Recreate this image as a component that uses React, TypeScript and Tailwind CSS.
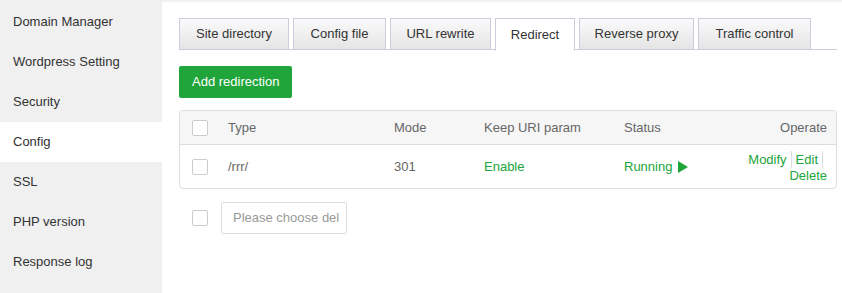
import React from 'react';

const menu = ['Domain Manager', 'Wordpress Setting', 'Security', 'Config', 'SSL', 'PHP version', 'Response log'];
const tabs: [string, string][] = [
  ['Site directory', 'w-[110px]'],
  ['Config file', 'w-[93px]'],
  ['URL rewrite', 'w-[101px]'],
  ['Redirect', 'w-[80px]'],
  ['Reverse proxy', 'w-[115px]'],
  ['Traffic control', 'w-[113px]'],
];

function Checkbox() {
  return <span className="block w-[16px] h-[16px] border border-[#cccccc] rounded-[2px] bg-white" />;
}

export default function App() {
  const active = 'Config';
  const activeTab = 'Redirect';

  return (
    <div
      className="flex w-[842px] h-[293px] bg-white text-[13px] overflow-hidden"
      style={{ fontFamily: '"Liberation Sans", Arial, sans-serif' }}
    >
      {/* Sidebar */}
      <div className="w-[162px] shrink-0 bg-[#f0f0f0] pt-[2px]">
        {menu.map((item) => (
          <div
            key={item}
            className={
              'h-[40px] flex items-center pl-[13px] text-[#333333] ' + (item === active ? 'bg-white' : '')
            }
          >
            {item}
          </div>
        ))}
      </div>

      {/* Main */}
      <div className="flex-1 border-t-2 border-[#f2f2f2] pl-[17px] pr-[5px] pt-[16px]">
        {/* Tabs */}
        <div className="flex border-b border-[#cdcbdc] h-[32px]">
          {tabs.map(([tab, w]) => (
            <div
              key={tab}
              className={
                w +
                ' mr-[4px] flex items-center justify-center border border-[#cdcbdc] text-[#333333] ' +
                (tab === activeTab
                  ? 'h-[33px] bg-white border-b-white'
                  : 'h-[32px] bg-gradient-to-b from-[#fafafa] to-[#e5e5e5]')
              }
            >
              {tab}
            </div>
          ))}
        </div>

        <button className="mt-[16px] h-[32px] px-[13px] bg-[#20a53a] text-white rounded-[2px]">
          Add redirection
        </button>

        {/* Table */}
        <div className="mt-[12px] border border-[#dddddd] rounded-[4px] overflow-hidden">
          <div className="grid grid-cols-[48px_166px_90px_140px_1fr_auto] items-center h-[34px] bg-[#f6f6f6] border-b border-[#dddddd] text-[#666666] pr-[9px]">
            <div className="pl-[12px]">
              <Checkbox />
            </div>
            <div>Type</div>
            <div>Mode</div>
            <div>Keep URI param</div>
            <div>Status</div>
            <div className="text-right">Operate</div>
          </div>
          <div className="grid grid-cols-[48px_166px_90px_140px_1fr_auto] items-center h-[43px] text-[#666666] pr-[9px]">
            <div className="pl-[12px]">
              <Checkbox />
            </div>
            <div>/rrr/</div>
            <div>301</div>
            <div className="text-[#20a53a]">Enable</div>
            <div className="flex items-center gap-[6px] text-[#20a53a]">
              Running
              <svg width="10" height="12" viewBox="0 0 10 12">
                <path d="M0 0 L10 6 L0 12 Z" fill="#20a53a" />
              </svg>
            </div>
            <div className="flex flex-col items-end leading-[15px] text-[#20a53a]">
              <div className="flex items-center">
                <span>Modify</span>
                <span className="mx-[4px] w-px h-[17px] bg-[#dddddd]" />
                <span>Edit</span>
                <span className="mx-[4px] w-px h-[17px] bg-[#dddddd]" />
              </div>
              <div>Delete</div>
            </div>
          </div>
        </div>

        {/* Batch */}
        <div className="flex items-center mt-[13px] pl-[13px] gap-[13px]">
          <Checkbox />
          <div className="h-[32px] w-[126px] border border-[#dddddd] rounded-[2px] flex items-center pl-[11px] text-[#999999]">
            Please choose del
          </div>
        </div>
      </div>
    </div>
  );
}
